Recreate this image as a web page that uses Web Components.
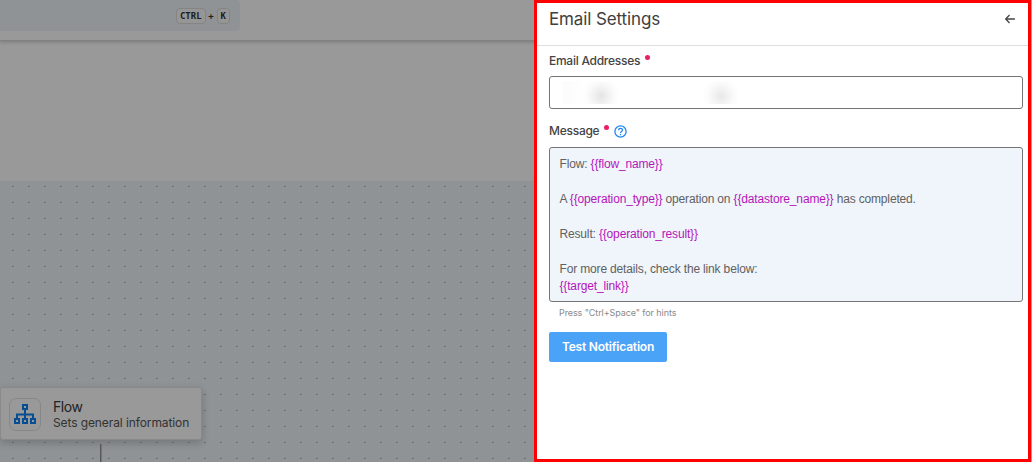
<!DOCTYPE html>
<html lang="en">
<head>
<meta charset="utf-8">
<title>Email Settings</title>
<style>
html,body{margin:0;height:100%;overflow:hidden}
body{font-family:Inter,"Noto Sans",sans-serif;color:#333}
</style>
</head>
<body>
<flow-app></flow-app>
<script>
function define(name, markup){
  const t=document.createElement('template');
  t.innerHTML=markup;
  customElements.define(name,class extends HTMLElement{
    constructor(){super();this.attachShadow({mode:'open'}).append(t.content.cloneNode(true));}
  });
}

define('key-cap',`<style>
:host{display:block;box-sizing:border-box;height:16px;padding:0 3px;border:1px solid #dcdcdc;border-radius:4px;background:#fafafa;font:700 9px/14px "DejaVu Sans Mono",monospace;color:#333}
</style><slot></slot>`);

define('top-bar',`<style>
:host{display:block;height:40px;background:#fff;border-bottom:1px solid #d8d8d8;box-shadow:0 1px 4px rgba(0,0,0,.22);position:relative}
.search{box-sizing:border-box;width:240px;height:31px;background:#eff5fa;border-radius:0 4px 4px 0;display:flex;align-items:center;justify-content:flex-end;padding:1px 10px 0 0}
.plus{width:11px;text-align:center;font:700 9px/14px "DejaVu Sans Mono",monospace}
</style><div class="search"><key-cap>CTRL</key-cap><span class="plus">+</span><key-cap>K</key-cap></div>`);

define('flow-node',`<style>
:host{display:flex;align-items:center;box-sizing:border-box;width:202px;height:53px;border:1px solid #e4e4e4;border-radius:3px;background:#fff;box-shadow:0 3px 8px rgba(0,0,0,.2);padding:1px 0 0 8px;gap:12px}
.icon{box-sizing:border-box;width:32px;height:33px;border:1px solid #e2e2e2;border-radius:7px;display:flex;align-items:center;justify-content:center}
svg{display:block}
.t{font-size:14px;line-height:17px;letter-spacing:-.4px;color:#3a3a3a}
.s{font-size:12px;line-height:16px;letter-spacing:-.1px;color:#555}
</style>
<div class="icon"><svg width="24" height="22" viewBox="0 0 24 22" fill="none" stroke="#0d80f2" stroke-width="2"><path d="M10 2h4v4h-4zM2 16h4v4H2zM10 16h4v4h-4zM18 16h4v4h-4zM12 6v10M4 16v-4.5h16V16"/></svg></div>
<div><div class="t"><slot name="title"></slot></div><div class="s"><slot></slot></div></div>`);

define('flow-canvas',`<style>
:host{display:block;position:relative;height:281px;background:radial-gradient(circle at 12.8px 5.4px,#a8adb1 .5px,transparent 1px) 0 0/16px 16px #eff5fa}
flow-node{position:absolute;left:0;top:206px}
.edge{position:absolute;left:100px;top:263px;width:1px;height:18px;background:#919191;border-right:1px solid #c4c4c4}
</style><flow-node><span slot="title">Flow</span>Sets general information</flow-node><div class="edge"></div>`);

define('field-label',`<style>
:host{display:flex;height:16px;align-items:center;font-size:12px;line-height:16px;font-weight:500;color:#444;letter-spacing:-.26px}
i{width:5px;height:5px;border-radius:50%;background:#e91e63;margin:-7px 0 0 5px}
::slotted(svg){display:block;margin-left:5px}
</style><slot></slot><i></i><slot name="help"></slot>`);

define('address-input',`<style>
:host{display:block;box-sizing:border-box;height:33px;border:1px solid #757575;border-radius:3px;overflow:hidden;background:#fff;padding:4px 0 0 13px}
.mask{width:200px;height:23px;background:
radial-gradient(ellipse 19px 20px at 38px 15px,rgba(0,0,0,.105),rgba(0,0,0,.06) 35%,rgba(0,0,0,.018) 70%,transparent),
radial-gradient(ellipse 19px 20px at 158px 15px,rgba(0,0,0,.09),rgba(0,0,0,.05) 35%,rgba(0,0,0,.016) 70%,transparent),
linear-gradient(90deg,rgba(0,0,0,.016),transparent 12%)}
</style><div class="mask"></div>`);

define('template-editor',`<style>
:host{display:block;box-sizing:border-box;height:155px;border:1px solid #757575;border-radius:3px;background:#eff5fa;padding:7.5px 9.5px;font:12px/17.5px "Liberation Sans",Arial,sans-serif;letter-spacing:-.16px;color:#616161;white-space:pre}
div{height:17.5px}
b{font-weight:400;color:#b516bb}
</style><div>Flow: <b>{{flow_name}}</b></div><div></div><div>A <b>{{operation_type}}</b> operation on <b>{{datastore_name}}</b> has completed.</div><div></div><div>Result: <b>{{operation_result}}</b></div><div></div><div>For more details, check the link below:</div><div><b>{{target_link}}</b></div>`);

define('primary-button',`<style>
:host{display:flex;align-items:center;justify-content:center;box-sizing:border-box;width:118px;height:30px;padding-bottom:1px;border-radius:2px;background:#4ba3f7;color:#fff;font-size:12px;font-weight:600;letter-spacing:-.2px}
</style><slot></slot>`);

define('settings-drawer',`<style>
:host{display:block;box-sizing:border-box;width:497px;height:462px;background:#fff;border:3px solid #f00}
header{box-sizing:border-box;height:43px;border-bottom:1px solid #dedede;display:flex;justify-content:space-between;padding:5px 12px 0 12px}
h1{margin:0;font-size:17px;line-height:23px;font-weight:400;letter-spacing:-.12px;color:#404040}
header svg{margin-top:5px;display:block}
main{padding:7px 5px 0 12px}
address-input{margin:7px 0 14px}
template-editor{margin-top:8px}
.hint{font-size:9px;line-height:12px;letter-spacing:-.09px;margin:5px 0 13px 10px;color:#8a8a8a}
</style>
<header><h1>Email Settings</h1><svg width="12" height="12" viewBox="0 0 12 12" fill="none" stroke="#444" stroke-width="1.3"><path d="M10.8 6H2M5.5 2 1.7 6l3.8 4"/></svg></header>
<main><field-label>Email Addresses</field-label><address-input></address-input>
<field-label>Message<svg slot="help" width="13" height="13" viewBox="0 0 13 13" fill="none" stroke="#2088f5" stroke-width="1.3"><circle cx="6.5" cy="6.5" r="5.6"/><path d="M4.6 5.2c0-2.5 3.9-2.4 3.9-.1C8.5 6.5 6.5 6.5 6.5 8M6.5 9v1.3"/></svg></field-label>
<template-editor></template-editor><div class="hint">Press "Ctrl+Space" for hints</div><primary-button>Test Notification</primary-button></main>`);

define('flow-app',`<style>
:host{display:block;position:relative;width:1032px;height:462px;overflow:hidden;background:#fff}
.gap{height:140px}
.scrim{position:absolute;inset:0;background:rgba(0,0,0,.4);display:flex;justify-content:flex-end}
.rim{width:1px;background:#ff8080}
</style><top-bar></top-bar><div class="gap"></div><flow-canvas></flow-canvas><div class="scrim"><settings-drawer></settings-drawer><div class="rim"></div></div>`);
</script>
</body>
</html>
